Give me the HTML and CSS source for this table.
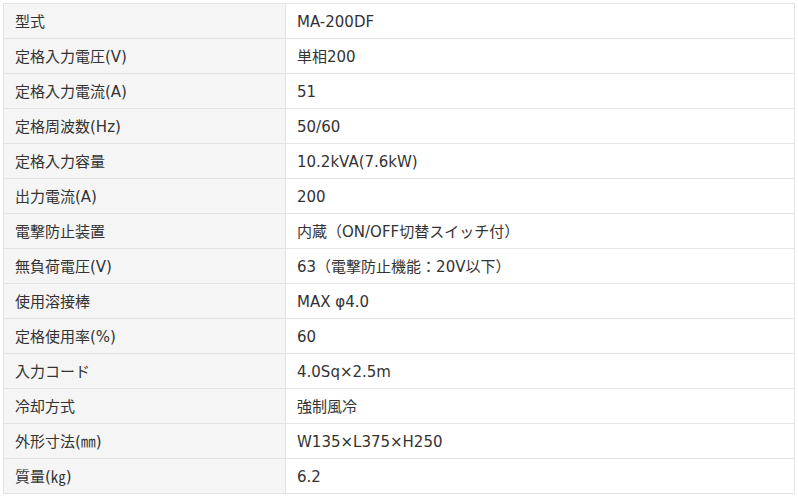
FILE: index.html
```html
<!DOCTYPE html>
<html lang="ja">
<head>
<meta charset="utf-8">
<link rel="stylesheet" href="styles.css">
</head>
<body>
<table class="spec">
<tbody>
<tr><th>型式</th><td>MA-200DF</td></tr>
<tr><th>定格入力電圧(V)</th><td>単相200</td></tr>
<tr><th>定格入力電流(A)</th><td>51</td></tr>
<tr><th>定格周波数(Hz)</th><td>50/60</td></tr>
<tr><th>定格入力容量</th><td>10.2kVA(7.6kW)</td></tr>
<tr><th>出力電流(A)</th><td>200</td></tr>
<tr><th>電撃防止装置</th><td>内蔵（ON/OFF切替スイッチ付）</td></tr>
<tr><th>無負荷電圧(V)</th><td>63（電撃防止機能：20V以下）</td></tr>
<tr><th>使用溶接棒</th><td>MAX φ4.0</td></tr>
<tr><th>定格使用率(%)</th><td>60</td></tr>
<tr><th>入力コード</th><td>4.0Sq×2.5m</td></tr>
<tr><th>冷却方式</th><td>強制風冷</td></tr>
<tr><th>外形寸法(㎜)</th><td>W135×L375×H250</td></tr>
<tr><th>質量(㎏)</th><td>6.2</td></tr>
</tbody>
</table>
</body>
</html>
```
FILE: styles.css
```css
html, body {
  margin: 0;
  padding: 0;
  background: #ffffff;
}
body {
  padding: 3px;
  font-family: "DejaVu Sans", "Noto Sans CJK JP", sans-serif;
  font-size: 15px;
  color: #333333;
}
.spec {
  width: 792px;
  border-collapse: collapse;
  border: 1px solid #e3e3e3;
}
.spec th,
.spec td {
  height: 33px;
  padding: 1px 11px 0 11px;
  border: 1px solid #e3e3e3;
  text-align: left;
  font-weight: normal;
  vertical-align: middle;
  line-height: 20px;
}
.spec th {
  width: 259px;
  background: #f5f5f5;
}
.spec td {
  background: #ffffff;
}
```
